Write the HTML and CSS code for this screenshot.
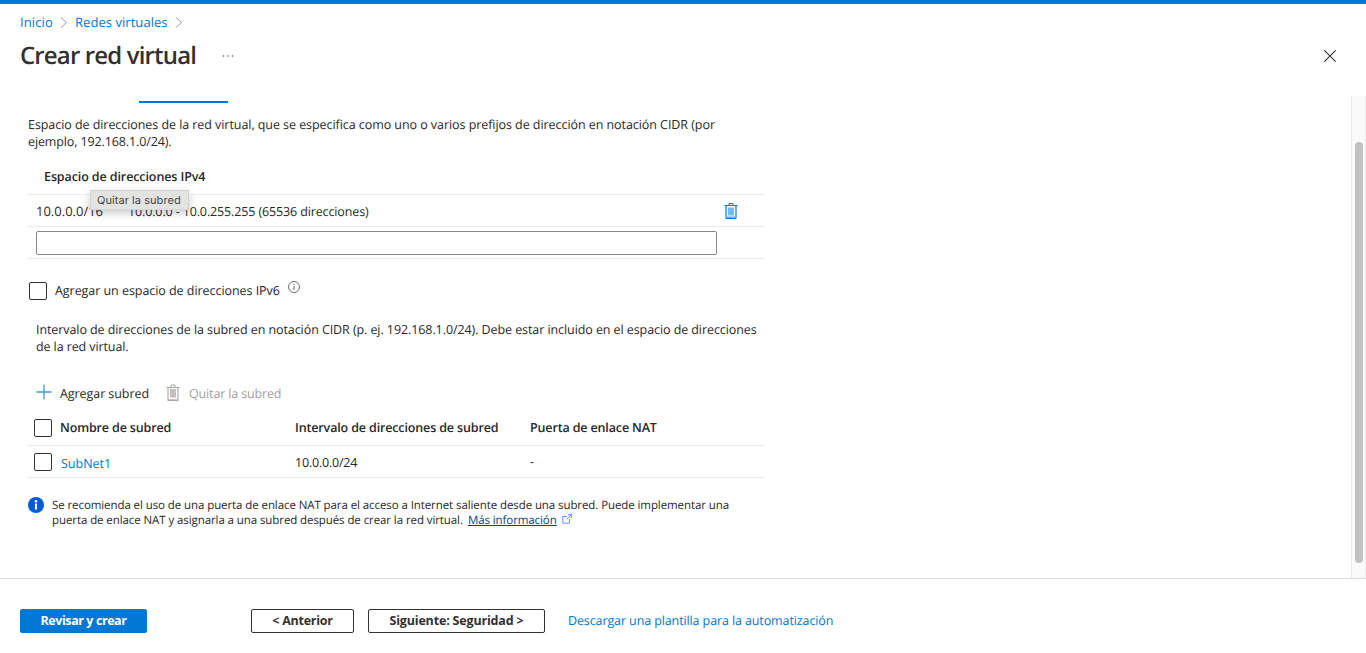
FILE: index.html
```html
<!DOCTYPE html>
<html lang="es">
<head>
<meta charset="utf-8">
<title>Crear red virtual</title>
<link rel="stylesheet" href="styles.css">
</head>
<body>
<div class="topbar"></div>
<header class="head">
  <nav class="crumbs">
    <a class="c-home">Inicio</a>
    <svg width="8" height="12" viewBox="0 0 8 12"><path d="M1 1.500 6.500 6.500l-5.500 5" fill="none" stroke="#a19f9d"/></svg>
    <a class="c-nets">Redes virtuales</a>
    <svg width="8" height="12" viewBox="0 0 8 12"><path d="M1 1.500 6.500 6.500l-5.500 5" fill="none" stroke="#a19f9d"/></svg>
  </nav>
  <div class="title-row">
    <h1>Crear red virtual</h1>
    <svg class="more" width="14" height="4" viewBox="0 0 14 4" fill="#605e5c"><circle cx="2.5" cy="2" r=".8"/><circle cx="7" cy="2" r=".8"/><circle cx="11.5" cy="2" r=".8"/></svg>
    <svg class="close" width="14" height="14" viewBox="0 0 14 14"><path d="M1.300 1.300l11.400 11.400M12.700 1.300 1.300 12.700" stroke="#323130" stroke-width="1.100"/></svg>
  </div>
</header>
<main class="body">
  <section class="content">
    <div class="tab-line"></div>
    <p class="intro"><span class="i1">Espacio de direcciones de la red virtual, que se especifica como uno o varios prefijos de dirección en notación CIDR (por</span><br><span class="i2">ejemplo, 192.168.1.0/24).</span></p>
    <div class="space">
      <div class="space-head"><span>Espacio de direcciones IPv4</span></div>
      <div class="space-row">
        <span class="cidr">10.0.0.0/16</span>
        <span class="range">10.0.0.0 - 10.0.255.255 (65536 direcciones)</span>
        <svg class="bin blue" width="14" height="17" viewBox="0 0 14 17"><path d="M2 3v12.500h10V3" fill="none" stroke="#69afe5" stroke-width="2"/><path d="M4 5.500h6v8H4z" fill="#7ab8ea"/><path d="M.5 3.500h13M2 16.500h10M5 3V1.500h4V3" fill="none" stroke="#0078d4"/></svg>
        <div class="tooltip"><span>Quitar la subred</span></div>
      </div>
      <div class="space-row"><input class="field" type="text"></div>
    </div>
    <div class="ipv6">
      <i class="box"></i><span class="v6">Agregar un espacio de direcciones IPv6</span>
      <svg class="tip" width="12" height="12" viewBox="0 0 12 12"><circle cx="6" cy="6" r="5.500" fill="none" stroke="#605e5c" stroke-width=".9"/><path d="M6 5v4M6 3v1" stroke="#605e5c"/></svg>
    </div>
    <p class="sub-intro"><span class="s1">Intervalo de direcciones de la subred en notación CIDR (p. ej. 192.168.1.0/24). Debe estar incluido en el espacio de direcciones</span><br><span class="s2">de la red virtual.</span></p>
    <div class="tools">
      <svg class="plus" width="16" height="16" viewBox="0 0 16 16"><path d="M8 .5v15M.5 8h15" stroke="#3c97de" stroke-width="1.3"/></svg>
      <span class="add"><span>Agregar subred</span></span>
      <svg class="bin gray" width="14" height="17" viewBox="0 0 14 17"><path d="M2 3v13h10V3" fill="none" stroke="#b5b4b3" stroke-width="1.300"/><path d="M4 5h6v8.500H4z" fill="#c2c0be"/><path d="M.5 3.500h13M2 16.500h10M5 3V1h4v2" fill="none" stroke="#a8a6a4"/></svg>
      <span class="del">Quitar la subred</span>
    </div>
    <div class="grid">
      <div class="row row-head"><i class="box"></i><span class="n"><b class="h1t">Nombre de subred</b></span><span class="a"><b class="h2t">Intervalo de direcciones de subred</b></span><span><b class="h3t">Puerta de enlace NAT</b></span></div>
      <div class="row"><i class="box"></i><span class="n"><a class="sn">SubNet1</a></span><span class="a"><span class="ip">10.0.0.0/24</span></span><span>-</span></div>
    </div>
    <div class="notice">
      <svg width="16" height="16" viewBox="0 0 16 16"><circle cx="8" cy="8" r="8" fill="#015cda"/><path d="M8 6.500v6" stroke="#fff" stroke-width="2"/><circle cx="8" cy="4.200" r="1.300" fill="#fff"/></svg>
      <p><span class="n1">Se recomienda el uso de una puerta de enlace NAT para el acceso a Internet saliente desde una subred. Puede implementar una</span><br><span class="n2">puerta de enlace NAT y asignarla a una subred después de crear la red virtual.</span><a class="info">Más información</a><svg class="ext" width="10" height="10" viewBox="0 0 10 10" fill="none" stroke="#4f8ff0" stroke-width=".9"><path d="M5 2.500H.8v6.700h6.700V5M6 .6h3.400V4M9.400.6 4.500 5.500"/></svg></p>
    </div>
  </section>
  <div class="scroll"><div class="thumb"></div></div>
</main>
<footer class="foot">
  <button class="primary"><span>Revisar y crear</span></button>
  <button class="prev"><span>&lt; Anterior</span></button>
  <button class="next"><span>Siguiente: Seguridad &gt;</span></button>
  <a class="dl">Descargar una plantilla para la automatización</a>
</footer>
</body>
</html>
```
FILE: styles.css
```css
* { box-sizing: border-box; }
body { margin: 0; height: 653px; overflow: hidden; display: flex; flex-direction: column; background: #fff; color: #292827; font: 12.5px/17px "Open Sans", "Noto Sans", sans-serif; white-space: nowrap; text-rendering: geometricPrecision; }
p, h1 { margin: 0; }
svg { display: block; flex: none; }
a { color: #0078d4; }
.topbar { height: 4px; background: #0078d4; }
.head { height: 92px; padding: 9px 29px 0 20px; }
.crumbs { display: flex; align-items: center; gap: 7px; height: 18px; font-size: 13px; }
.c-home { width: 33px; letter-spacing: .1px; }
.c-nets { width: 93px; letter-spacing: .05px; }
.title-row { display: flex; align-items: center; height: 32px; margin-top: 9px; }
h1 { font-size: 24px; line-height: 32px; font-weight: 600; width: 201px; height: 32px; letter-spacing: -0.85px; color: #323130; }
.close { margin-left: auto; }
.body { display: flex; height: 482px; }
.content { width: 765px; padding: 5px 0 0 28px; }
.tab-line { width: 89px; height: 2px; margin-left: 111px; background: #0078d4; }
.intro { margin-top: 13px; }
.i1 { letter-spacing: -.06px; }
.i2 { letter-spacing: -.12px; }
.space-head { height: 45px; padding: 18px 0 0 16px; border-bottom: 1px solid #edebe9; font-weight: 600; letter-spacing: -.1px; }
.space-row { position: relative; display: flex; align-items: center; height: 32px; padding-left: 8px; border-bottom: 1px solid #edebe9; }
.cidr { width: 92px; padding-top: 2px; font-size: 13px; }
.range { padding-top: 2px; letter-spacing: -.13px; }
.blue { margin-left: auto; margin-right: 27px; }
.tooltip { position: absolute; left: 62px; top: -5px; width: 99px; height: 20px; padding-left: 6px; background: #e3e3e1; border: 1px solid #d5d5d3; box-shadow: 0 3px 8px rgba(0,0,0,.22); font: 11px/18px Inter, "Liberation Sans", sans-serif; letter-spacing: .06px; color: #454545; }
.field { width: 681px; height: 24px; border: 1px solid #8a8886; border-radius: 2px; outline: 0; }
.box { display: block; flex: none; width: 18px; height: 18px; border: 1px solid #323130; border-radius: 2px; }
.ipv6 { display: flex; align-items: center; height: 18px; margin: 23px 0 0 1px; }
.v6 { margin: 0 8px; padding-bottom: 2px; letter-spacing: -.05px; }
.tip { margin-bottom: 8px; }
.sub-intro { margin: 21px 0 0 8px; }
.s1 { letter-spacing: -.08px; }
.s2 { letter-spacing: -.1px; }
.tools { display: flex; align-items: center; height: 18px; margin: 29px 0 0 8px; }
.plus, .gray { margin-bottom: 2px; }
.add { width: 106px; margin-left: 8px; letter-spacing: -.07px; }
.del { margin-left: 9px; color: #a19f9d; letter-spacing: -.15px; }
.grid { margin-top: 8px; }
.row { display: flex; align-items: center; height: 32px; padding-left: 6px; border-bottom: 1px solid #edebe9; }
.row-head { height: 36px; }
.row b { font-weight: 600; letter-spacing: -.14px; }
.n { width: 235px; margin-left: 8px; }
.a { width: 235px; }
.row:not(.row-head) .n { padding: 3px 0 0 1px; }
.row:not(.row-head) .a { padding-top: 2px; }
.ip { letter-spacing: -.2px; }
.notice { display: flex; gap: 8px; margin-top: 19px; font-size: 11.5px; line-height: 15px; letter-spacing: -.085px; }
.notice p { padding-top: 1px; }
.info { margin-left: 5px; color: #004578; text-decoration: underline; }
.ext { display: inline-block; margin-left: 5px; }
.scroll { width: 15px; margin-left: auto; background: #fafafa; border-left: 1px solid #e8e8e8; border-right: 1px solid #ededed; padding: 46px 0 0 3px; }
.thumb { width: 8px; height: 421px; border-radius: 4px; background: #c1c1c1; }
.foot { display: flex; align-items: center; height: 75px; padding: 10px 0 0 20px; border-top: 1px solid #dcdcdc; }
button { height: 24px; padding: 0; border: 1px solid #323130; border-radius: 2px; background: #fff; color: #323130; font: 700 12.5px/20px "Open Sans", "Noto Sans", sans-serif; letter-spacing: -.25px; }
.primary { width: 127px; margin-right: 104px; background: #0078d4; border-color: #0078d4; color: #fff; letter-spacing: -.42px; }
.prev { width: 103px; margin-right: 14px; }
.next { width: 177px; margin-right: 23px; letter-spacing: -.17px; }
.dl { padding-bottom: 2px; letter-spacing: -.11px; }
```
